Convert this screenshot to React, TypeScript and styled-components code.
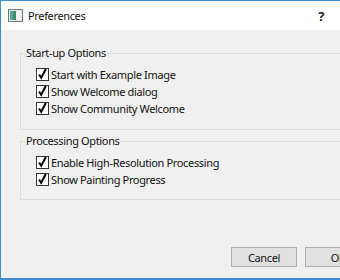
import React from "react";
import styled, { createGlobalStyle } from "styled-components";

const Global = createGlobalStyle`
  html, body { margin: 0; padding: 0; overflow: hidden; background: #f0f0f0; }
  #root { width: 340px; height: 280px; overflow: hidden; }
`;

const Window = styled.div`
  width: 398px;
  height: 280px;
  box-sizing: border-box;
  border-top: 1px solid #3d8fd2;
  border-left: 1px solid #3d8fd2;
  border-bottom: 2px solid #3d8fd2;
  display: flex;
  flex-direction: column;
  font-family: "Noto Sans", "Open Sans", sans-serif;
  font-size: 11px;
  letter-spacing: -0.35px;
  color: #111;
`;

const TitleBar = styled.div`
  height: 29px;
  flex: none;
  background: #ffffff;
  display: flex;
  align-items: center;
  padding-left: 7px;
  padding-right: 74px;
  gap: 5px;
`;

const TitleText = styled.span`
  flex: 1;
  font-size: 11px;
`;

const Help = styled.span`
  font-size: 13px;
  font-weight: 700;
  color: #222;
`;

const Body = styled.div`
  flex: 1;
  background: #f0f0f0;
  display: flex;
  flex-direction: column;
  padding: 15px 19px 0 19px;
`;

const Group = styled.fieldset<{ $bottom: number }>`
  margin: 0 0 3px 0;
  border: 1px solid #dcdcdc;
  padding: 5px 0 ${(p) => p.$bottom}px 15px;
  display: flex;
  flex-direction: column;
  min-inline-size: 0;
`;

const Legend = styled.legend`
  margin-left: -11px;
  padding: 0 1px;
  line-height: 16px;
`;

const Row = styled.label`
  height: 17px;
  display: flex;
  align-items: center;
  gap: 2px;
  white-space: nowrap;
`;

const Box = styled.span`
  width: 11px;
  height: 11px;
  border: 1px solid #333;
  background: #fff;
  flex: none;
  position: relative;
`;

const Footer = styled.div`
  margin-top: auto;
  display: flex;
  justify-content: flex-end;
  gap: 8px;
  padding: 0 8px 11px 0;
`;

const Button = styled.button`
  width: 66px;
  height: 20px;
  box-sizing: border-box;
  border: 1px solid #adadad;
  background: #e1e1e1;
  font-family: "Noto Sans", "Open Sans", sans-serif;
  font-size: 11px;
  letter-spacing: -0.35px;
  color: #111;
  padding: 0;
`;

const Check = () => (
  <svg width="11" height="11" viewBox="0 0 11 11" style={{ position: "absolute", left: 0, top: 0, overflow: "visible" }}>
    <path d="M2 5.5 L4.2 8.8 L8.8 0" fill="none" stroke="#000" strokeWidth="2" />
  </svg>
);

const Option = ({ label }: { label: string }) => (
  <Row>
    <Box>
      <Check />
    </Box>
    {label}
  </Row>
);

const AppIcon = () => (
  <svg width="15" height="13" viewBox="0 0 15 13">
    <rect x="0.5" y="0.5" width="14" height="12" fill="#e8eef0" stroke="#6f7a80" />
    <rect x="2" y="2" width="6" height="9" fill="#3e8a78" />
    <rect x="2" y="2" width="3" height="9" fill="#5fa48c" />
    <rect x="9" y="2" width="4" height="9" fill="#f4f7f8" />
  </svg>
);

export default function App() {
  return (
    <>
      <Global />
      <Window>
        <TitleBar>
          <AppIcon />
          <TitleText>Preferences</TitleText>
          <Help>?</Help>
        </TitleBar>
        <Body>
          <Group $bottom={12}>
            <Legend>Start-up Options</Legend>
            <Option label="Start with Example Image" />
            <Option label="Show Welcome dialog" />
            <Option label="Show Community Welcome" />
          </Group>
          <Group $bottom={11}>
            <Legend>Processing Options</Legend>
            <Option label="Enable High-Resolution Processing" />
            <Option label="Show Painting Progress" />
          </Group>
          <Footer>
            <Button>Cancel</Button>
            <Button>OK</Button>
          </Footer>
        </Body>
      </Window>
    </>
  );
}
